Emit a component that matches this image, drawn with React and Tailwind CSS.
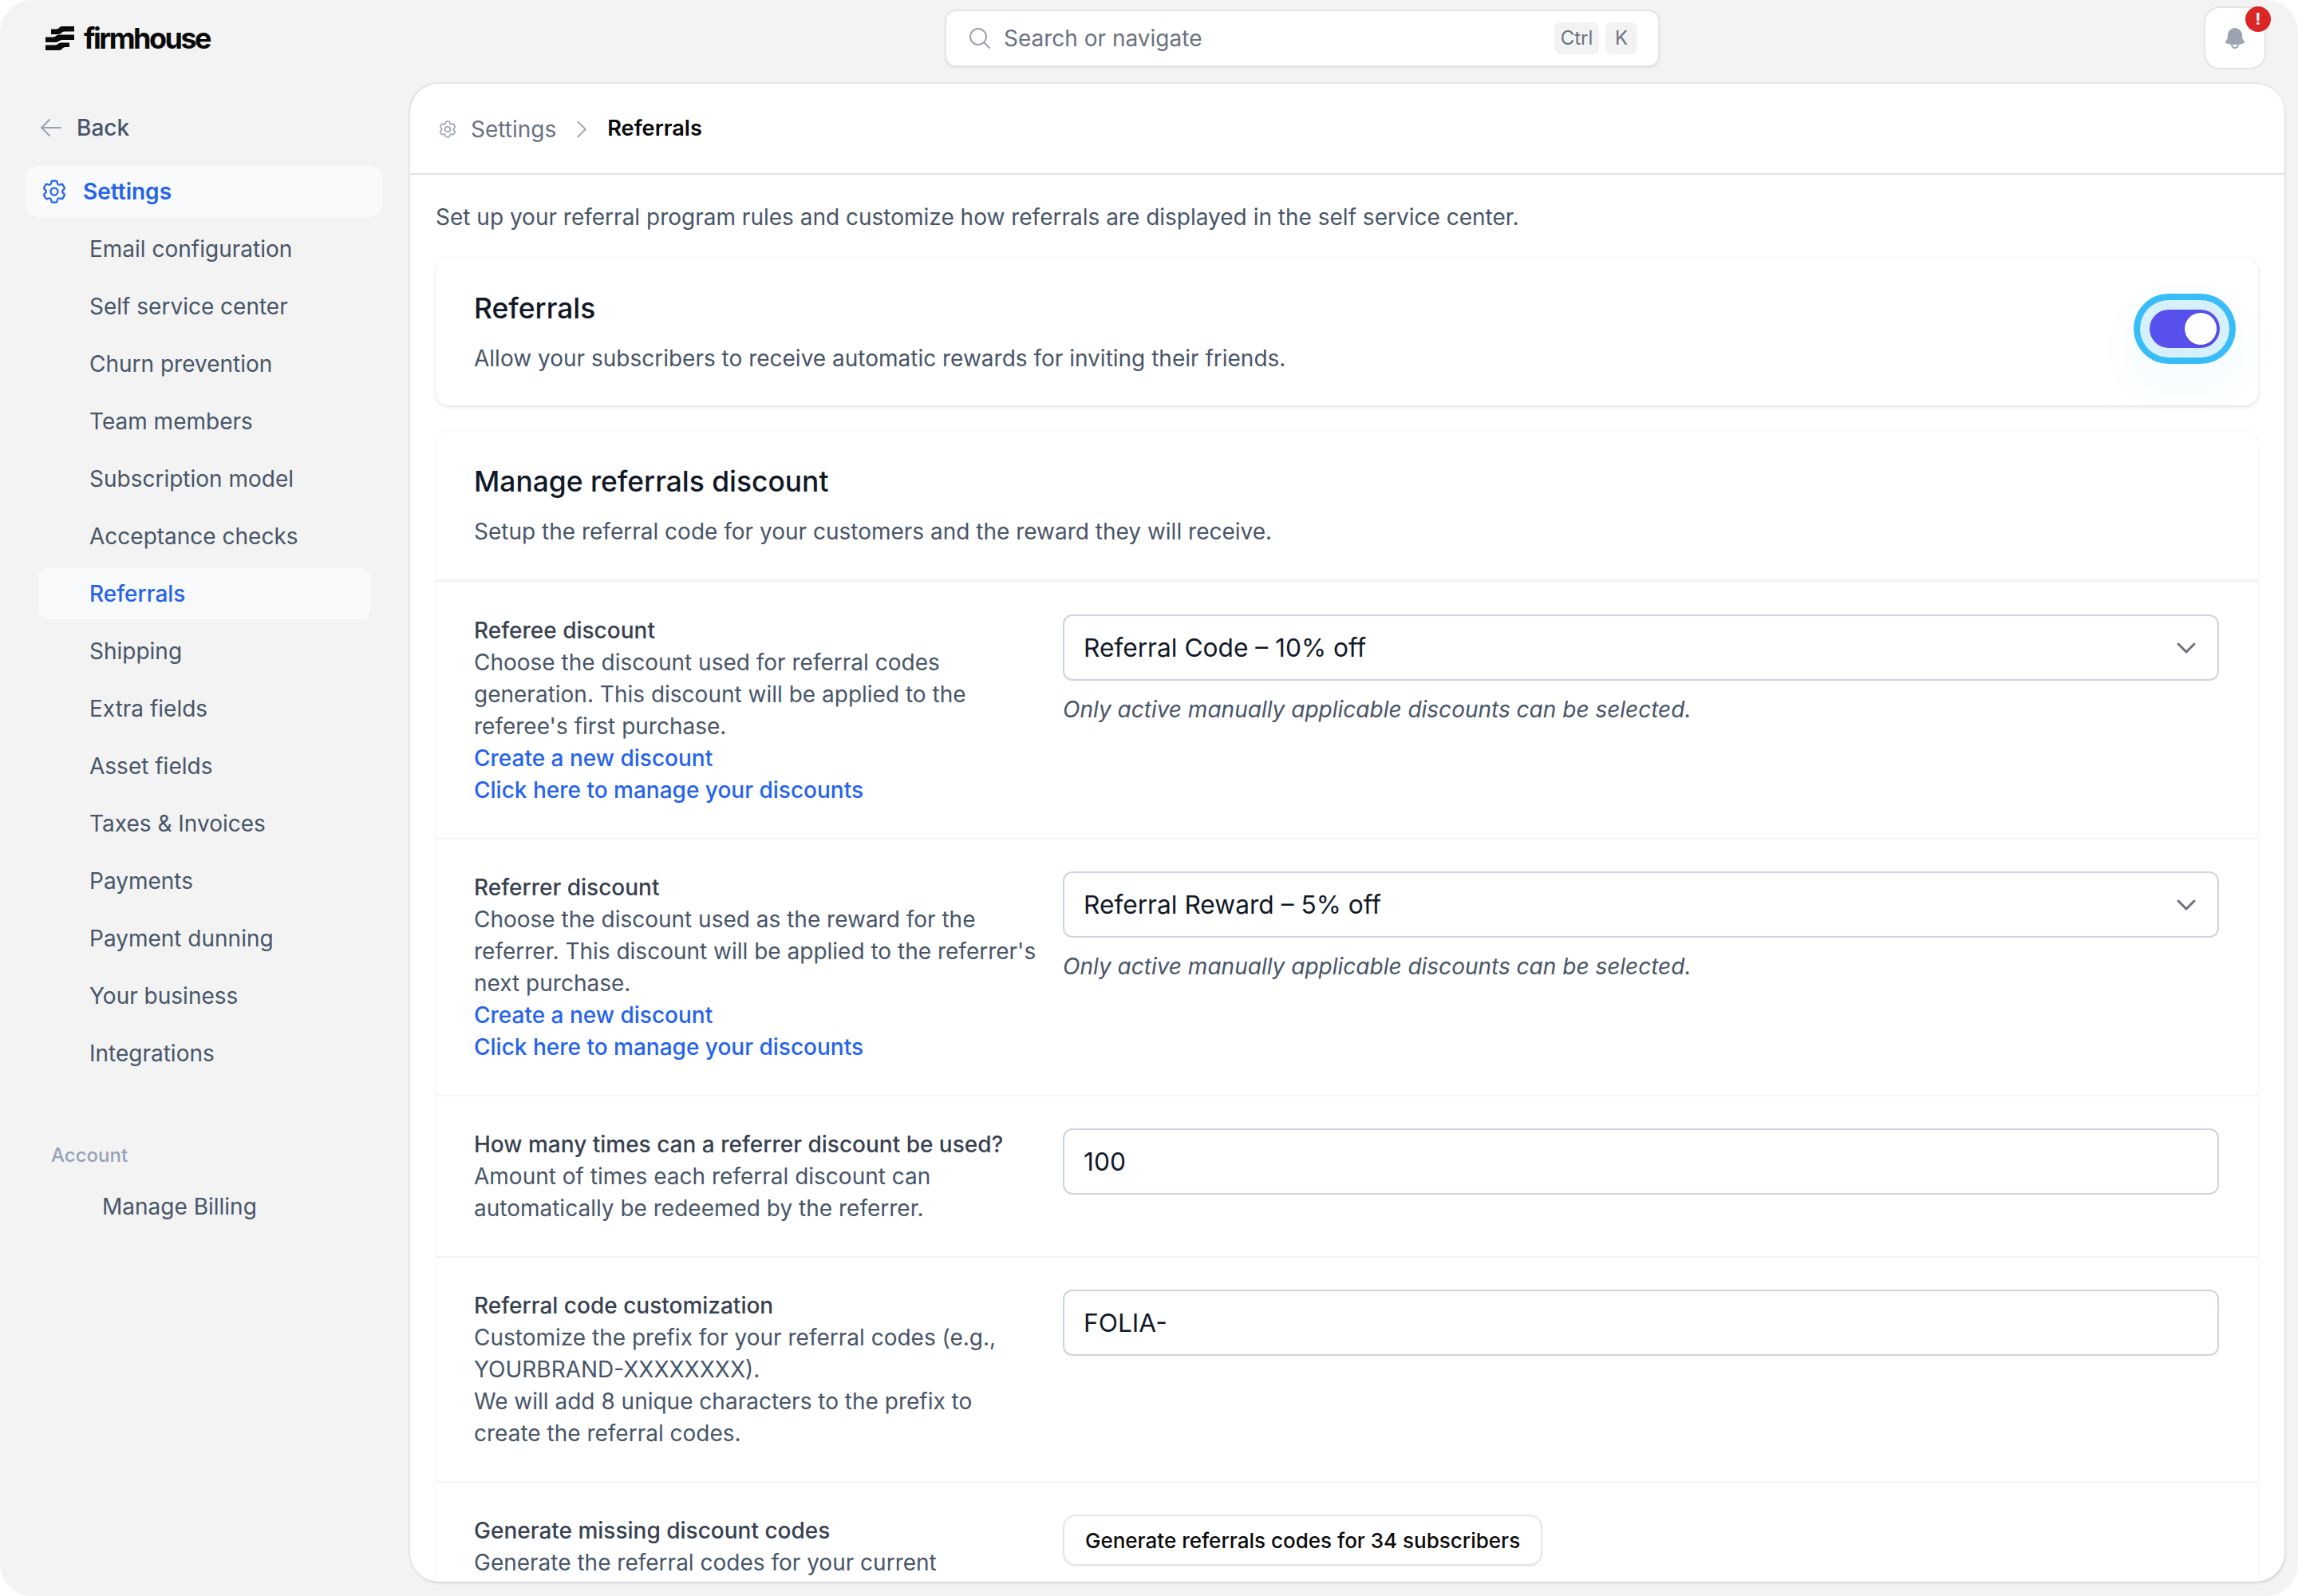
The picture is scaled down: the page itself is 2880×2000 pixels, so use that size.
import React from "react";
import { HiOutlineCog6Tooth, HiOutlineArrowLeft, HiOutlineMagnifyingGlass, HiBell, HiOutlineChevronRight } from "react-icons/hi2";

const F = { fontFamily: "Inter, 'Liberation Sans', sans-serif" };

function Logo() {
  return (
    <div className="flex items-center gap-[12px] h-[30px]">
      <svg width="36" height="30" viewBox="0 0 36 30" fill="#0a0a0a">
        <path d="M7 3.5 H14 C17 3.5 17 0 21 0 H36 V6.5 H24 C20 6.5 20 10 16 10 H7 Z" />
        <path d="M0 13.5 H10 C13 13.5 13 10.5 17 10.5 H36 V17 H21 C17 17 17 20 13 20 H0 Z" />
        <path d="M0 23.5 H12 C16 23.5 16 20.5 19 20.5 H30 V26 H25 C21 26 21 30 17 30 H0 Z" />
      </svg>
      <span className="text-[36px] font-bold tracking-[-0.07em] text-[#0a0a0a] leading-none">firmhouse</span>
    </div>
  );
}

const items = ["Email configuration","Self service center","Churn prevention","Team members","Subscription model","Acceptance checks","Referrals","Shipping","Extra fields","Asset fields","Taxes & Invoices","Payments","Payment dunning","Your business","Integrations"];

function Sidebar() {
  return (
    <aside className="w-[514px] shrink-0 flex flex-col pt-[37px]">
      <a className="flex items-center gap-[16px] pl-[48px] h-[36px] mb-[30px] text-[28px] font-medium text-[#475569]">
        <HiOutlineArrowLeft className="w-[32px] h-[32px] text-[#94a3b8]" />
        <span>Back</span>
      </a>
      <a className="mx-[32px] w-[448px] h-[64px] rounded-[16px] bg-[#f8fafc] flex items-center gap-[18px] pl-[18px] text-[28px] font-semibold text-[#2563eb]">
        <HiOutlineCog6Tooth className="w-[36px] h-[36px]" />
        <span>Settings</span>
      </a>
      <nav className="flex flex-col mt-[8px] ml-[48px] w-[416px] gap-[8px]">
        {items.map((t) => (
          <a key={t} className={"h-[64px] rounded-[12px] flex items-center pl-[64px] text-[28px] " + (t === "Referrals" ? "bg-[#f8fafc] text-[#2563eb] font-medium" : "text-[#475569]")}>{t}</a>
        ))}
      </nav>
      <div className="mt-[80px] pl-[64px] text-[24px] font-medium text-[#94a3b8] leading-[32px]">Account</div>
      <a className="mt-[28px] pl-[128px] text-[28px] text-[#475569] leading-[40px]">Manage Billing</a>
    </aside>
  );
}

function Chevron() {
  return (
    <svg className="w-[40px] h-[40px]" viewBox="0 0 20 20" fill="none" stroke="#6b7280" strokeWidth="1.5" strokeLinecap="round" strokeLinejoin="round">
      <path d="M5 7.5l5 5 5-5" />
    </svg>
  );
}

function Select({ value }) {
  return (
    <div className="h-[83px] rounded-[12px] border-2 border-[#cbd5e1] bg-white flex items-center justify-between pl-[24px] pr-[19px] text-[31.7px] text-[#111827]">
      <span>{value}</span>
      <Chevron />
    </div>
  );
}

function Input({ value }) {
  return (
    <div className="h-[83px] rounded-[12px] border-2 border-[#cbd5e1] bg-white flex items-center pl-[24px] text-[31.7px] text-[#111827]">{value}</div>
  );
}

const Help = () => <p className="mt-[16px] text-[28px] leading-[40px] italic text-[#475569]">Only active manually applicable discounts can be selected.</p>;

function Row({ label, children, right, last }) {
  return (
    <div className={"grid grid-cols-[706px_1fr] gap-[32px] pl-[48px] pr-[49px] pt-[40px] " + (last ? "" : "pb-[40px] border-b-2 border-[#f1f5f9]")}>
      <div className="text-[28px] leading-[40px] text-[#475569]">
        <div className="font-medium text-[#374151]">{label}</div>
        {children}
      </div>
      <div>{right}</div>
    </div>
  );
}

const Links = () => (
  <>
    <a className="block text-[#2563eb] font-medium">Create a new discount</a>
    <a className="block text-[#2563eb] font-medium">Click here to manage your discounts</a>
  </>
);

function Main() {
  return (
    <main className="w-[2349px] h-[1877px] bg-white rounded-[36px] overflow-hidden shadow-[-1px_-1px_0_1px_#e5e5e5,1px_2px_3px_0_#d4d4d4] flex flex-col">
      <div className="h-[114px] pt-[1px] shrink-0 border-b-2 border-[#e5e5e5] flex items-center pl-[34px] text-[28px]">
        <HiOutlineCog6Tooth className="w-[26px] h-[26px] text-[#9ca3af]" />
        <span className="ml-[16px] text-[#6b7280]">Settings</span>
        <HiOutlineChevronRight className="ml-[17px] w-[30px] h-[30px] text-[#9ca3af]" />
        <span className="ml-[17px] text-[27.2px] font-semibold text-[#0a0a0a]">Referrals</span>
      </div>
      <div className="pl-[32px] pr-[33px] flex flex-col">
        <p className="mt-[33px] text-[28px] leading-[40px] text-[#475569]">Set up your referral program rules and customize how referrals are displayed in the self service center.</p>
        <section className="mt-[31px] h-[185px] rounded-[16px] bg-white shadow-[0_2px_4px_rgba(148,163,184,0.25),0_0_3px_rgba(148,163,184,0.12)] flex items-center justify-between pl-[48px] pr-[48px] relative">
          <div>
            <h2 className="text-[35.4px] leading-[48px] font-medium text-[#111827]">Referrals</h2>
            <p className="mt-[18px] text-[28px] leading-[40px] text-[#475569]">Allow your subscribers to receive automatic rewards for inviting their friends.</p>
          </div>
          <div className="-mt-[7px] w-[88px] h-[48px] rounded-full bg-[#5850ec] flex items-center justify-end pr-[4px] shadow-[0_0_0_12px_#d6f1fd,0_0_0_20px_#38bdf8,0_24px_60px_30px_rgba(125,211,252,0.08)]">
            <div className="w-[40px] h-[40px] rounded-full bg-white shadow-[0_1px_3px_rgba(0,0,0,0.15)]" />
          </div>
        </section>
        <section className="mt-[32px] rounded-[16px] bg-white shadow-[0_0_3px_rgba(148,163,184,0.2)]">
          <div className="h-[190px] border-b-4 border-[#f1f5f9] px-[48px] pt-[40px]">
            <h2 className="text-[35.4px] leading-[48px] font-medium text-[#111827]">Manage referrals discount</h2>
            <p className="mt-[18px] text-[28px] leading-[40px] text-[#475569]">Setup the referral code for your customers and the reward they will receive.</p>
          </div>
          <Row label="Referee discount" right={<><Select value="Referral Code – 10% off" /><Help /></>}>
            <p>Choose the discount used for referral codes generation. This discount will be applied to the referee's first purchase.</p>
            <Links />
          </Row>
          <Row label="Referrer discount" right={<><Select value="Referral Reward – 5% off" /><Help /></>}>
            <p>Choose the discount used as the reward for the referrer. This discount will be applied to the referrer's next purchase.</p>
            <Links />
          </Row>
          <Row label="How many times can a referrer discount be used?" right={<Input value="100" />}>
            <p>Amount of times each referral discount can automatically be redeemed by the referrer.</p>
          </Row>
          <Row label="Referral code customization" right={<Input value="FOLIA-" />}>
            <p>Customize the prefix for your referral codes (e.g., YOURBRAND-XXXXXXXX).</p>
            <p>We will add 8 unique characters to the prefix to create the referral codes.</p>
          </Row>
          <Row last label="Generate missing discount codes" right={
            <button className="h-[64px] px-[26px] rounded-[16px] border-2 border-[#e5e5e5] bg-white shadow-[0_1px_2px_rgba(0,0,0,0.08)] text-[26px] font-medium text-[#0a0a0a]">Generate referrals codes for 34 subscribers</button>
          }>
            <p>Generate the referral codes for your current subscribers.</p>
          </Row>
        </section>
      </div>
    </main>
  );
}

function TopBar() {
  return (
    <header className="h-[105px] w-full flex items-start">
      <div className="pl-[57px] pt-[33px] w-[1184px] shrink-0"><Logo /></div>
      <div className="mt-[12px] w-[896px] h-[72px] rounded-[14px] bg-white border-2 border-[#e5e5e5] shadow-[0_1px_2px_rgba(0,0,0,0.08)] flex items-center pl-[26px] pr-[26px]">
        <HiOutlineMagnifyingGlass className="w-[32px] h-[32px] text-[#9ca3af] shrink-0" />
        <span className="ml-[14px] text-[28px] text-[#6b7280] grow">Search or navigate</span>
        <kbd className="h-[40px] w-[56px] rounded-[8px] bg-[#f3f3f3] flex items-center justify-center text-[24px] text-[#6b7280]" style={F}>Ctrl</kbd>
        <kbd className="ml-[8px] h-[40px] w-[40px] rounded-[8px] bg-[#f3f3f3] flex items-center justify-center text-[24px] text-[#6b7280]" style={F}>K</kbd>
      </div>
      <div className="ml-[682px] mt-[8px] relative w-[78px] h-[79px] rounded-[20px] bg-white border-2 border-[#e5e5e5] flex items-center justify-center">
        <HiBell className="w-[32px] h-[32px] text-[#9ca3af]" />
        <span className="absolute right-[-8px] top-[-2px] w-[32px] h-[32px] rounded-full bg-[#dc2626] text-white text-[20px] font-bold flex items-center justify-center">!</span>
      </div>
    </header>
  );
}

export default function App() {
  return (
    <div className="w-[2880px] h-[2000px] bg-white overflow-hidden" style={F}>
      <div className="w-full h-full bg-[#f3f3f3] rounded-[40px] overflow-hidden">
        <TopBar />
        <div className="flex h-[1895px]">
          <Sidebar />
          <Main />
        </div>
      </div>
    </div>
  );
}
